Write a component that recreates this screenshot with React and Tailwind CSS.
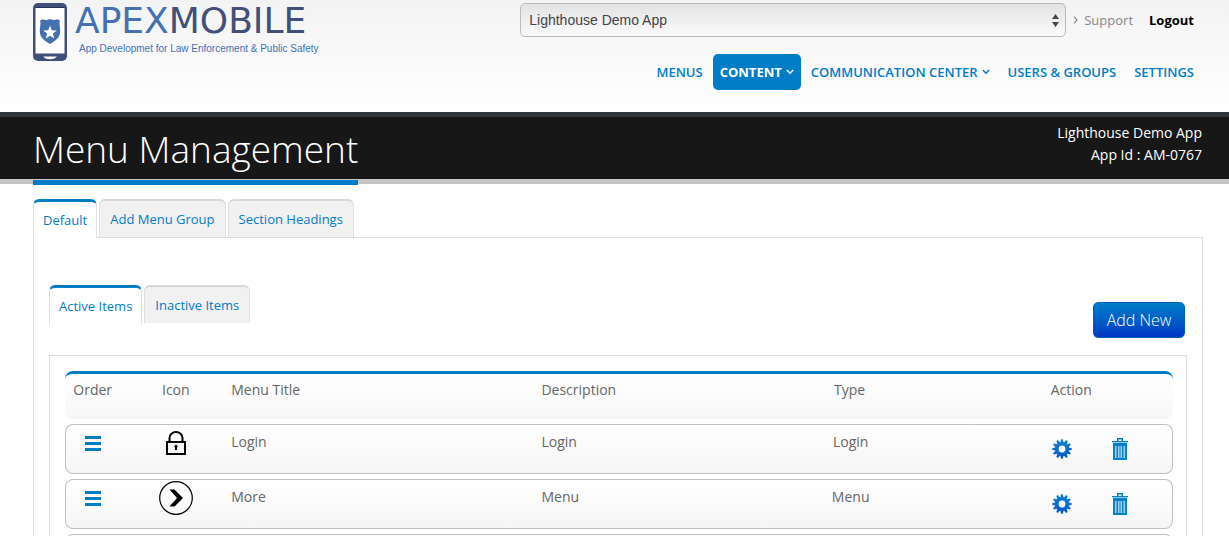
import { useState } from 'react';
import { clsx } from 'clsx';

const navItems = [
  { label: 'MENUS' },
  { label: 'CONTENT', active: true, dropdown: true },
  { label: 'COMMUNICATION CENTER', dropdown: true },
  { label: 'USERS & GROUPS' },
  { label: 'SETTINGS' },
];

const menuItems = [
  { id: 1, icon: 'lock', title: 'Login', description: 'Login', type: 'Login' },
  { id: 2, icon: 'chevron', title: 'More', description: 'Menu', type: 'Menu' },
  { id: 3 },
];

const gearTeeth = [0, 30, 60, 90, 120, 150, 180, 210, 240, 270, 300, 330];

const Logo = () => (
  <a href="#" className="flex">
    <svg width="34" height="58" viewBox="0 0 34 58" aria-hidden="true">
      <rect width="34" height="58" rx="5" fill="#414f7a" />
      <rect x="2.5" y="5" width="29" height="45.5" fill="#fff" />
      <path d="M2.5 4.5h29" stroke="#26315a" />
      <path
        d="M7 17.500 9.500 16.300q3.500 1.500 7.500-.3 4 1.800 7.500.3L27 17.500c-1.200 3 .2 6 .2 10.500 0 7-4.700 9.500-10.200 13C11.500 37.500 6.800 35 6.800 28c0-4.500 1.400-7.500.2-10.500Z"
        fill="#4671b0"
      />
      <path d="m17 22.500 1.800 4.700 5 .3-3.900 3.100 1.300 4.900-4.200-2.800-4.200 2.800 1.300-4.900-3.900-3.100 5-.3Z" fill="#fff" />
      <path d="M10 53.500h14l-2.500 2q-4.500 1.500-9 0Z" fill="#fff" />
    </svg>
    <span className="flex flex-col gap-1 pl-2">
      <span className="font-['DejaVu_Sans'] text-4xl/9 text-[#4571b3]">
        APEX<span className="text-[#414f7a]">MOBILE</span>
      </span>
      <span className="pl-1 font-['Liberation_Sans'] text-[10px]/3 text-[#4571b3]">
        App Developmet for Law Enforcement &amp; Public Safety
      </span>
    </span>
  </a>
);

const Caret = () => (
  <svg width="8" height="6" viewBox="0 0 8 6" fill="none" stroke="currentColor" strokeWidth="1.4" aria-hidden="true">
    <path d="m.8 1 3.200 3.300L7.200 1" />
  </svg>
);

const LockIcon = () => (
  <svg width="20" height="24" viewBox="0 0 20 24" fill="none" stroke="#000" aria-hidden="true">
    <path d="M3.500 10.500V7a6.500 6 0 0 1 13 0v3.500" strokeWidth="2" />
    <rect x="1" y="11" width="18" height="12" strokeWidth="2" />
    <path d="M10 14v5" strokeWidth="2" />
    <circle cx="10" cy="15.500" r="1.200" fill="#000" />
  </svg>
);

const ChevronIcon = () => (
  <svg width="34" height="34" viewBox="0 0 34 34" aria-hidden="true">
    <circle cx="17" cy="17" r="16.300" fill="none" stroke="#000" strokeWidth="1.200" />
    <path d="M10.500 8.500h5L24 17l-8.500 8.500h-5L18 17Z" fill="#000" />
  </svg>
);

const GearIcon = () => (
  <svg width="20" height="20" viewBox="0 0 20 20" aria-hidden="true">
    <defs>
      <linearGradient id="gear" x1="0" y1="0" x2="0" y2="20" gradientUnits="userSpaceOnUse">
        <stop stopColor="#0d84d6" />
        <stop offset="1" stopColor="#0557c4" />
      </linearGradient>
      <mask id="gear-shape">
        {gearTeeth.map((angle) => (
          <path key={angle} d="M8.200 4 9.200.2h1.600L11.800 4Z" transform={`rotate(${angle} 10 10)`} fill="#fff" />
        ))}
        <circle cx="10" cy="10" r="7" fill="#fff" />
        <circle cx="10" cy="10" r="3.400" fill="#000" />
      </mask>
    </defs>
    <rect width="20" height="20" fill="url(#gear)" mask="url(#gear-shape)" />
  </svg>
);

const TrashIcon = () => (
  <svg width="16" height="22" viewBox="0 0 16 22" aria-hidden="true">
    <path d="M5 3V0h6v3H9.500V1.500h-3V3Z" fill="#0680c9" />
    <path d="M0 3h16v1H0z" fill="#0680c9" />
    <path d="M0 4h16v1H0z" fill="#9bcdea" />
    <path d="M1 5h14v17H1z" fill="#0680c9" />
    <path d="M3 8h1.500v12H3zM6 8h1.500v12H6zM8.500 8H10v12H8.500zM11.500 8H13v12h-1.500z" fill="#a5d2ee" />
  </svg>
);

const Tabs = ({ items }) => {
  const [current, setCurrent] = useState(items[0]);

  return (
    <div className="flex items-start gap-0.5" role="tablist">
      {items.map((item) => (
        <button
          key={item}
          role="tab"
          aria-selected={item === current}
          onClick={() => setCurrent(item)}
          className={clsx(
            'rounded-t-md border-x border-x-[#dedede] text-[13px] text-[#007dc6]',
            item === current
              ? 'h-[39px] border-t-3 border-t-[#007dc6] bg-white px-[9px]'
              : 'h-[38px] border-t-2 border-t-[#d8d8d8] bg-[#f1f1f1] px-[10px]'
          )}
        >
          {item}
        </button>
      ))}
    </div>
  );
};

const MenuRow = ({ item }) => {
  const cell = 'h-[50px] border-y border-[#c0c0c0] bg-linear-to-b from-white to-[#f5f5f5] align-top';

  return (
    <tr>
      <td className={clsx(cell, 'rounded-l-lg border-l pt-[11px]')}>
        <button aria-label="Drag to reorder" className="mx-auto block h-[15px] w-4 border-y-3 border-[#007dc6] py-[3px]">
          <span className="block h-[3px] bg-[#007dc6]" />
        </button>
      </td>
      <td className={cell}>
        <div className="flex h-9 items-center justify-center">
          {item.icon === 'lock' && <LockIcon />}
          {item.icon === 'chevron' && <ChevronIcon />}
        </div>
      </td>
      <td className={clsx(cell, 'pt-[7px]')}>{item.title}</td>
      <td className={clsx(cell, 'pt-[7px]')}>{item.description}</td>
      <td className={clsx(cell, 'pr-0.5 pt-[7px] text-center')}>{item.type}</td>
      <td className={clsx(cell, 'rounded-r-lg border-r pt-[13px]')}>
        <div className="flex items-center gap-10 pl-[78px]">
          <button aria-label="Edit"><GearIcon /></button>
          <button aria-label="Delete"><TrashIcon /></button>
        </div>
      </td>
    </tr>
  );
};

const App = () => {
  const head = 'h-12 border-t-3 border-[#007dc6] bg-linear-to-b from-white to-[#f7f7f7] pt-1.5 align-top font-normal';

  return (
    <div className="h-screen overflow-hidden bg-white font-['Open_Sans',sans-serif] text-sm text-[#666]">
      <header className="flex h-28 justify-between bg-linear-to-b from-[#f3f3f3] to-white pl-[33px] pr-[35px] pt-[3px]">
        <Logo />
        <div className="flex flex-col items-end gap-[17px]">
          <div className="flex items-center text-[13px]">
            <div className="relative">
              <select
                aria-label="App"
                className="h-[34px] w-[546px] appearance-none rounded-[5px] border border-[#bbb] bg-linear-to-b from-[#e3e3e3] to-[#fbfbfb] px-2 font-['Liberation_Sans',sans-serif] text-sm text-[#444]"
              >
                <option>Lighthouse Demo App</option>
              </select>
              <svg className="pointer-events-none absolute right-[7px] top-[11px]" width="7" height="13" viewBox="0 0 7 13" fill="#444" aria-hidden="true">
                <path d="M0 5 3.500 0 7 5ZM0 8h7l-3.500 5Z" />
              </svg>
            </div>
            <a href="#" className="flex items-center gap-1.5 pl-[7px] text-[#888]">
              <svg width="5" height="8" viewBox="0 0 5 8" fill="none" stroke="currentColor" strokeWidth="1.200" aria-hidden="true">
                <path d="m1 .7 3 3.300-3 3.300" />
              </svg>
              Support
            </a>
            <a href="#" className="pl-4 font-bold text-black">Logout</a>
          </div>
          <nav className="flex items-center text-[13px] font-semibold text-[#007dc6]">
            {navItems.map((item) => (
              <a
                key={item.label}
                href="#"
                className={clsx(
                  'flex h-9 items-center gap-1',
                  item.active ? 'mx-[10px] rounded-[5px] bg-[#007dc6] px-[7px] font-bold text-white' : 'not-last:mr-[18px] first:mr-0'
                )}
              >
                {item.label}
                {item.dropdown && <Caret />}
              </a>
            ))}
          </nav>
        </div>
      </header>

      <div className="flex h-[72px] justify-between border-b-5 border-t-5 border-b-[#c5c5c5] border-t-[#2f373b] bg-[#171717] pl-[33px] pr-[27px] text-white">
        <h1 className="-mb-1.5 h-[68px] border-b-5 border-[#007dc6] text-[37px]/[64px] font-light">Menu Management</h1>
        <div className="pt-[5px] text-right text-sm/[22px] font-medium">
          <p>Lighthouse Demo App</p>
          <p>App Id : AM-0767</p>
        </div>
      </div>

      <main className="pl-[33px] pr-[26px] pt-[15px]">
        <div className="-mb-px">
          <Tabs items={['Default', 'Add Menu Group', 'Section Headings']} />
        </div>
        <section className="border border-[#ddd] px-[15px] pt-[47px]">
          <div className="flex justify-between">
            <Tabs items={['Active Items', 'Inactive Items']} />
            <button className="mr-0.5 mt-[17px] h-9 w-[92px] rounded-[5px] border border-[#0060b4] bg-linear-to-b from-[#007dc6] to-[#0036c4] text-base font-light text-white">
              Add New
            </button>
          </div>
          <div className="mt-[17px] border border-[#ddd] pl-[15px] pr-[13px] pt-2.5">
            <table className="w-full table-fixed border-separate border-spacing-x-0 border-spacing-y-[5px]">
              <thead>
                <tr>
                  <th className={clsx(head, 'w-[5%] rounded-l-lg')}>Order</th>
                  <th className={clsx(head, 'w-[10%]')}>Icon</th>
                  <th className={clsx(head, 'w-[28%] text-left')}>Menu Title</th>
                  <th className={clsx(head, 'w-[17%] text-left')}>Description</th>
                  <th className={clsx(head, 'w-[22%] pr-1')}>Type</th>
                  <th className={clsx(head, 'w-[18%] rounded-r-lg pr-1')}>Action</th>
                </tr>
              </thead>
              <tbody>
                {menuItems.map((item) => (
                  <MenuRow key={item.id} item={item} />
                ))}
              </tbody>
            </table>
          </div>
        </section>
      </main>
    </div>
  );
};

export default App;
